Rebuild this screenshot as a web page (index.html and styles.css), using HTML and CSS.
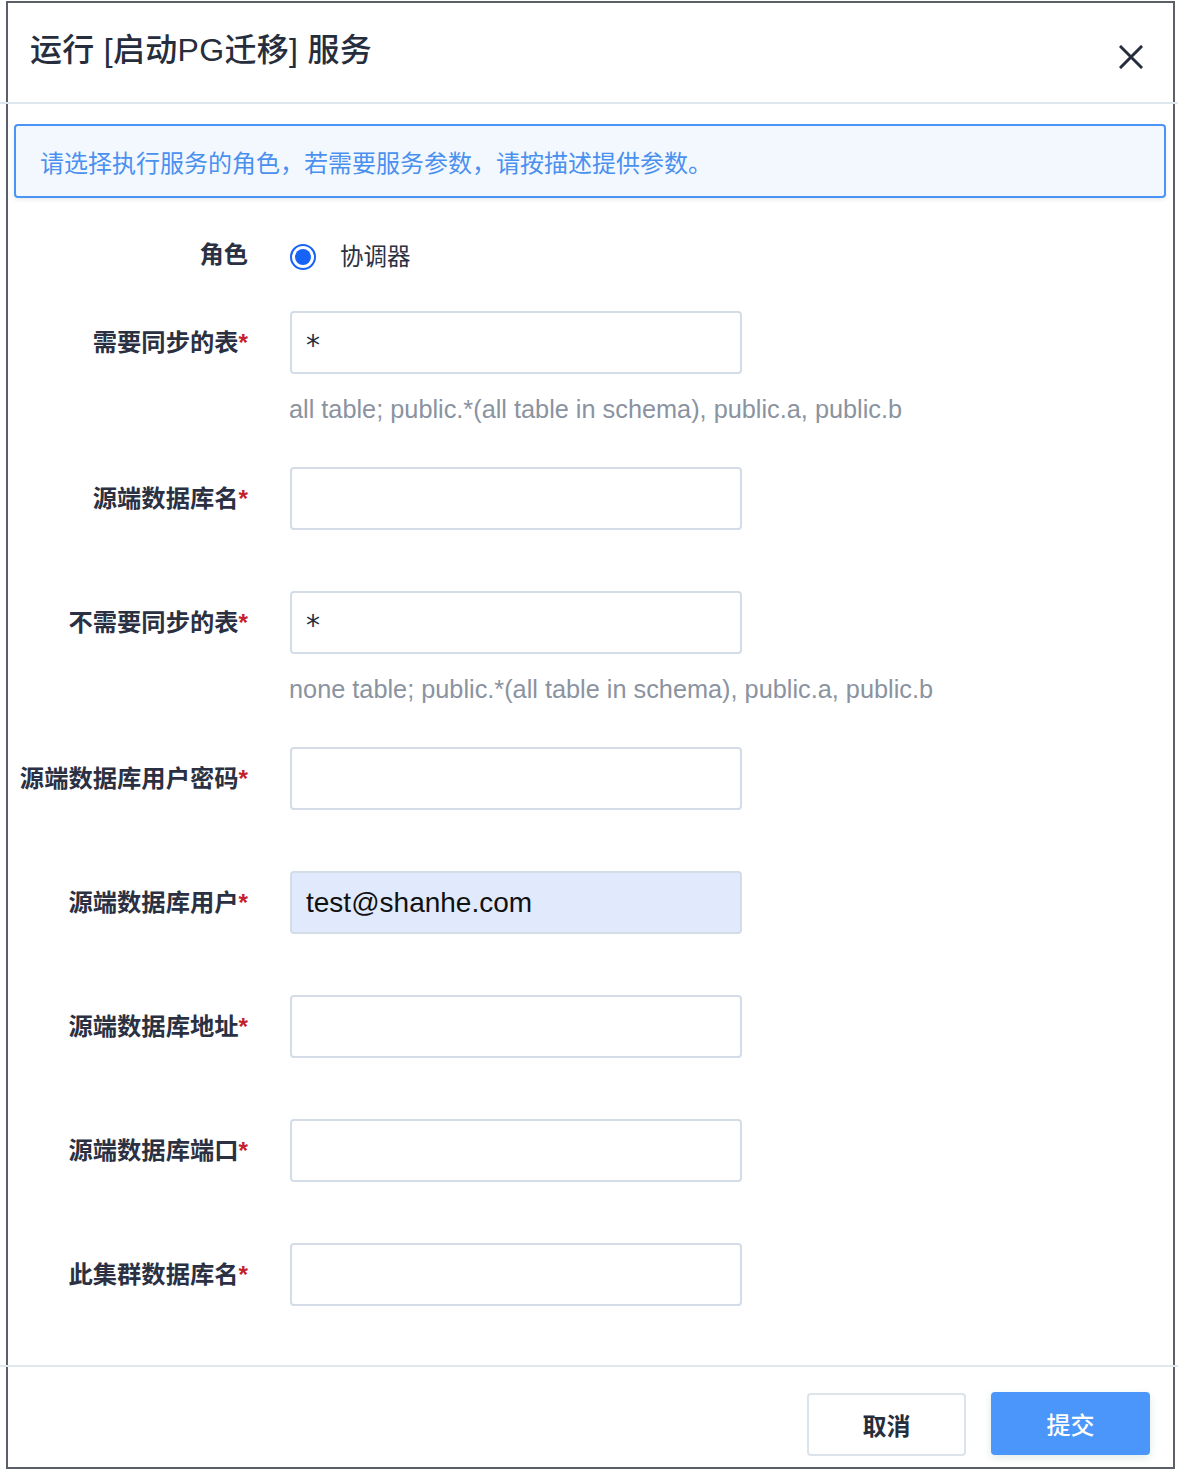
FILE: index.html
```html
<!DOCTYPE html>
<html lang="zh-CN">
<head>
<meta charset="utf-8">
<title>运行服务</title>
<link rel="stylesheet" href="styles.css">
</head>
<body>
<div class="modal">
  <div class="modal-header">
    <h1 class="modal-title">运行 [启动PG迁移] 服务</h1>
    <button class="close-btn" aria-label="关闭">
      <svg width="24" height="24" viewBox="0 0 24 24"><path d="M2 2 L22 22 M22 2 L2 22" stroke="#262d3d" stroke-width="3" stroke-linecap="square" fill="none"/></svg>
    </button>
  </div>
  <div class="divider"></div>
  <div class="modal-body">
    <div class="info">请选择执行服务的角色，若需要服务参数，请按描述提供参数。</div>
    <div class="form">
      <div class="row row-role">
        <div class="label">角色</div>
        <label class="radio"><span class="radio-dot"></span><span class="radio-text">协调器</span></label>
      </div>
      <div class="row has-hint">
        <div class="label">需要同步的表<span class="req">*</span></div>
        <div class="control">
          <div class="input"><span class="star">*</span></div>
          <div class="hint">all table; public.*(all table in schema), public.a, public.b</div>
        </div>
      </div>
      <div class="row">
        <div class="label">源端数据库名<span class="req">*</span></div>
        <div class="control"><div class="input"></div></div>
      </div>
      <div class="row has-hint">
        <div class="label">不需要同步的表<span class="req">*</span></div>
        <div class="control">
          <div class="input"><span class="star">*</span></div>
          <div class="hint">none table; public.*(all table in schema), public.a, public.b</div>
        </div>
      </div>
      <div class="row">
        <div class="label">源端数据库用户密码<span class="req">*</span></div>
        <div class="control"><div class="input"></div></div>
      </div>
      <div class="row">
        <div class="label">源端数据库用户<span class="req">*</span></div>
        <div class="control"><div class="input filled">test@shanhe.com</div></div>
      </div>
      <div class="row">
        <div class="label">源端数据库地址<span class="req">*</span></div>
        <div class="control"><div class="input"></div></div>
      </div>
      <div class="row">
        <div class="label">源端数据库端口<span class="req">*</span></div>
        <div class="control"><div class="input"></div></div>
      </div>
      <div class="row last">
        <div class="label">此集群数据库名<span class="req">*</span></div>
        <div class="control"><div class="input"></div></div>
      </div>
    </div>
  </div>
  <div class="divider"></div>
  <div class="modal-footer">
    <button class="btn btn-default">取消</button>
    <button class="btn btn-primary">提交</button>
  </div>
</div>
</body>
</html>
```

FILE: styles.css
```css
* { box-sizing: border-box; }
html, body { margin: 0; padding: 0; background: #ffffff; }
body {
  font-family: "Liberation Sans", "Noto Sans CJK SC", sans-serif;
  color: #2b3142;
  width: 1178px;
  height: 1472px;
  overflow: hidden;
}
.modal {
  margin: 1px 0 0 6px;
  width: 1169px;
  height: 1468px;
  border: 2px solid #5b5f67;
  display: flex;
  flex-direction: column;
}
.modal-header {
  height: 99px;
  display: flex;
  align-items: flex-start;
  justify-content: space-between;
  padding: 0 30px 0 22px;
}
.modal-title {
  margin: 27px 0 0 0;
  font-size: 32px;
  font-weight: 500;
  line-height: 40px;
  letter-spacing: 0.3px;
  color: #262d3d;
}
.close-btn {
  margin-top: 42px;
  width: 24px;
  height: 24px;
  padding: 0;
  border: 0;
  background: none;
  display: block;
}
.close-btn svg { display: block; }
.divider {
  height: 2px;
  background: #dee6ee;
  margin: 0 -5px 0 -8px;
  flex: none;
}
.modal-body {
  flex: 1;
  padding: 20px 7px 0 6px;
}
.info {
  height: 74px;
  border: 2px solid #4a94f6;
  border-radius: 4px;
  background: #f3f8ff;
  box-shadow: 0 2px 4px rgba(0, 0, 0, 0.08);
  padding: 0 0 0 24px;
  display: flex;
  align-items: center;
  font-size: 24px;
  color: #4a90ef;
}
.form {
  margin-top: 37px;
  margin-left: -6px;
}
.row {
  display: flex;
  align-items: flex-start;
  margin-bottom: 61px;
}
.row.last { margin-bottom: 0; }
.row.has-hint { margin-bottom: 43px; }
.row-role {
  align-items: center;
  height: 40px;
  margin-bottom: 36px;
}
.label {
  width: 240px;
  flex: none;
  text-align: right;
  font-size: 24.3px;
  font-weight: 700;
  line-height: 63px;
  color: #2b3142;
  white-space: nowrap;
}
.row-role .label { line-height: 40px; }
.req { color: #c3212b; font-weight: 700; }
.control {
  margin-left: 42px;
  width: 452px;
  flex: none;
}
.radio {
  margin-left: 42px;
  display: flex;
  align-items: center;
}
.radio-dot {
  width: 26px;
  height: 26px;
  border-radius: 50%;
  border: 2px solid #1763f6;
  display: flex;
  align-items: center;
  justify-content: center;
  margin-top: 4px;
}
.radio-dot::after {
  content: "";
  width: 16px;
  height: 16px;
  border-radius: 50%;
  background: #1763f6;
}
.radio-text {
  margin-left: 24px;
  font-size: 23.5px;
  color: #2b3142;
}
.input {
  height: 63px;
  border: 2px solid #d3dce7;
  border-radius: 4px;
  background: #fff;
  padding: 0 14px;
  display: flex;
  align-items: center;
  font-size: 24px;
  color: #262d3d;
}
.star {
  font-family: "DejaVu Sans", sans-serif;
  font-size: 28px;
  margin-top: 6px;
}
.input.filled {
  background: #e1eafc;
  font-size: 28px;
  color: #111;
}
.hint {
  margin-top: 20px;
  margin-left: -1px;
  line-height: 30px;
  font-size: 25.3px;
  color: #8a939f;
  white-space: nowrap;
}
.modal-footer {
  flex: none;
  display: flex;
  justify-content: flex-end;
  align-items: flex-start;
  gap: 25px;
  padding: 25px 23px 0 0;
  height: 100px;
}
.btn {
  width: 159px;
  height: 63px;
  border-radius: 4px;
  font-family: "Liberation Sans", "Noto Sans CJK SC", sans-serif;
  font-size: 24px;
  padding: 0;
}
.btn-default {
  border: 2px solid #dde3ea;
  background: #fff;
  color: #262d3d;
  font-weight: 700;
  margin-top: 1px;
}
.btn-primary {
  border: 0;
  background: #4a96fa;
  color: #fff;
  font-weight: 500;
  box-shadow: 0 3px 8px rgba(74, 150, 120, 0.18);
}
```
